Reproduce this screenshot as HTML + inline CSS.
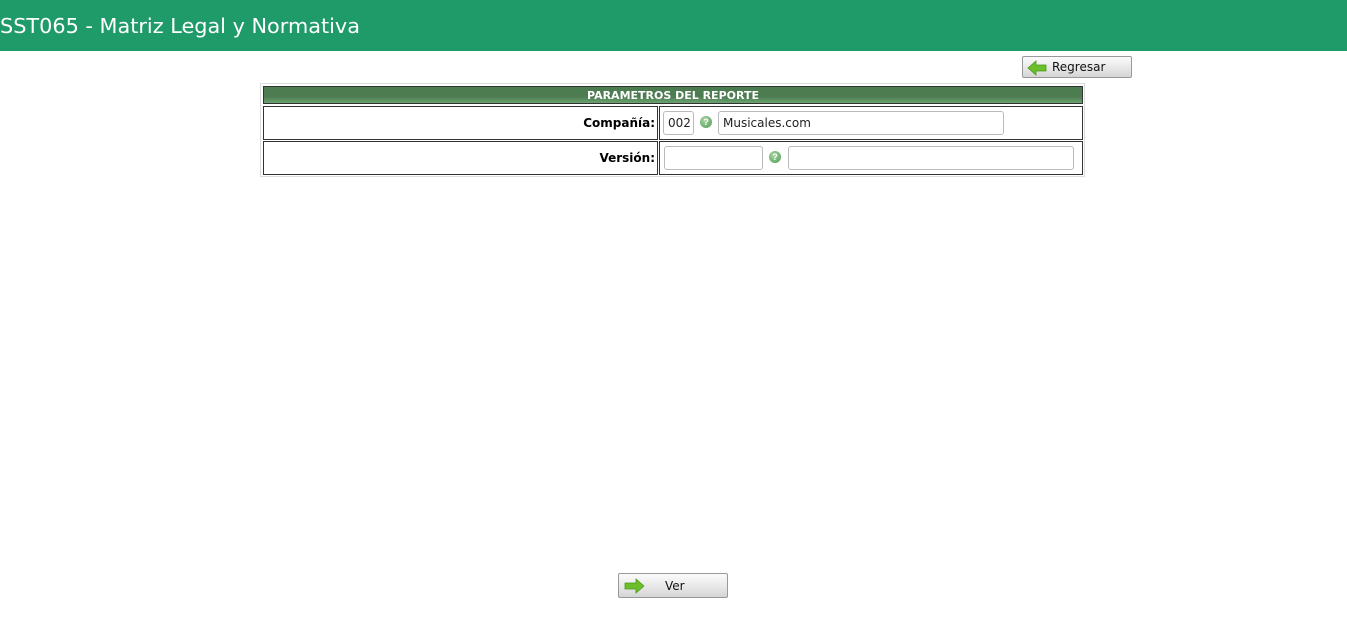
<!DOCTYPE html>
<html><head><meta charset="utf-8"><style>
body{margin:0;width:1347px;height:639px;background:#fff;font-family:"DejaVu Sans","Liberation Sans",sans-serif;position:relative;overflow:hidden}
.hdr{position:absolute;left:0;top:0;width:1347px;height:51px;background:#1f9b6a;color:#fff;font-size:20.8px;line-height:52px;white-space:nowrap}
.btn{position:absolute;height:22px;border:1px solid #999;border-radius:2px;background:linear-gradient(#fbfbfb,#e6e6e6 60%,#d4d4d4);font-size:12px;color:#111;box-sizing:border-box}
.btn svg{position:absolute;left:4px;top:3px}
.outer{position:absolute;left:260px;top:83px;width:825px;height:94px;border:1px solid #ddd;box-sizing:border-box}
.th{position:absolute;left:263px;top:86px;width:820px;height:18px;background:linear-gradient(#4a7d4f,#4e7b52 60%,#6aa36f);border:1px solid #333;box-sizing:border-box;color:#fff;font:bold 11px "DejaVu Sans",sans-serif;text-align:center;line-height:17px}
.c{position:absolute;border:1px solid #333;box-sizing:border-box}
.lbl{text-align:right;font:bold 12px "DejaVu Sans",sans-serif;padding-right:2px;line-height:32px}
.in{position:absolute;height:24px;border:1px solid #bbb;border-radius:3px;box-sizing:border-box;font-size:12px;line-height:22px;padding-left:4px;color:#222;background:#fff}
.q{position:absolute;width:12px;height:12px;border-radius:50%;background:radial-gradient(circle at 40% 35%,#a8d6a0,#4f9a55);color:#fff;font:bold 9px sans-serif;text-align:center;line-height:12px}
</style></head><body>
<div class="hdr">SST065 - Matriz Legal y Normativa</div>
<div class="btn" style="left:1022px;top:56px;width:110px;">
<svg width="20" height="16" viewBox="0 0 20 16"><path d="M1 8 L9 1 V5 H19 V11 H9 V15 Z" fill="#6cbf2a" stroke="#4a9a1a" stroke-width="0.8"/></svg>
<span style="position:absolute;left:29px;top:3px">Regresar</span></div>
<div class="outer"></div>
<div class="th">PARAMETROS DEL REPORTE</div>
<div class="c lbl" style="left:263px;top:106px;width:395px;height:34px">Compañía:</div>
<div class="c" style="left:659px;top:106px;width:424px;height:34px"></div>
<div class="c lbl" style="left:263px;top:141px;width:395px;height:34px">Versión:</div>
<div class="c" style="left:659px;top:141px;width:424px;height:34px"></div>
<div class="in" style="left:663px;top:111px;width:31px">002</div>
<div class="q" style="left:700px;top:116px">?</div>
<div class="in" style="left:718px;top:111px;width:286px">Musicales.com</div>
<div class="in" style="left:664px;top:146px;width:99px"></div>
<div class="q" style="left:769px;top:151px">?</div>
<div class="in" style="left:788px;top:146px;width:286px"></div>
<div class="btn" style="left:618px;top:573px;width:110px;height:25px">
<svg width="22" height="16" viewBox="0 0 22 16" style="top:4px"><path d="M21 8 L13 1 V5 H2 V11 H13 V15 Z" fill="#6cbf2a" stroke="#4a9a1a" stroke-width="0.8"/></svg>
<span style="position:absolute;left:46px;top:5px">Ver</span></div>
</body></html>
